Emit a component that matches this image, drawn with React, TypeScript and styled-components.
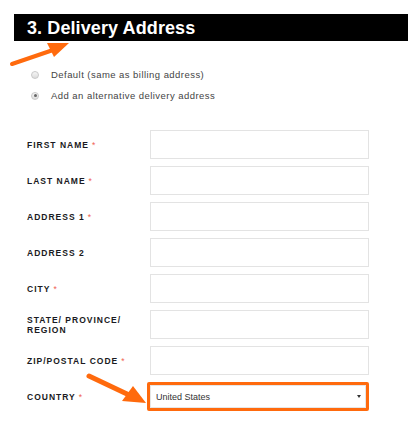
import React from "react";
import styled, { createGlobalStyle } from "styled-components";

const GlobalStyle = createGlobalStyle`
  html, body {
    margin: 0;
    padding: 0;
    background: #fff;
  }
  body {
    font-family: "Liberation Sans", Arial, sans-serif;
  }
`;

const orange = "#ff6a0d";

const fields = [
    { label: "First Name", required: true },
    { label: "Last Name", required: true },
    { label: "Address 1", required: true },
    { label: "Address 2", required: false },
    { label: "City", required: true },
    { label: "State/ Province/ Region", required: false },
    { label: "Zip/Postal Code", required: true },
];

const App = () => {
    return (
        <Page>
            <GlobalStyle />
            <Heading>3. Delivery Address</Heading>

            <RadioList>
                <RadioRow>
                    <Radio />
                    <span>Default (same as billing address)</span>
                </RadioRow>
                <RadioRow>
                    <Radio checked />
                    <span>Add an alternative delivery address</span>
                </RadioRow>
            </RadioList>

            <Form>
                {fields.map((f) => (
                    <Row key={f.label}>
                        <Label>
                            {f.label}
                            {f.required && <Star>*</Star>}
                        </Label>
                        <Input />
                    </Row>
                ))}
                <Row>
                    <Label>
                        Country<Star>*</Star>
                    </Label>
                    <Highlight>
                        <Select>
                            <span>United States</span>
                            <Caret />
                        </Select>
                    </Highlight>
                </Row>
            </Form>

            {/* annotation arrows drawn over the page */}
            <Annotations viewBox="0 0 408 441" width="408" height="441">
                <line x1="12" y1="64" x2="56" y2="49" stroke={orange} strokeWidth="4" strokeLinecap="round" />
                <polygon points="69,43 47,43 54,57" fill={orange} />
                <line x1="89" y1="376" x2="127" y2="394" stroke={orange} strokeWidth="5" strokeLinecap="round" />
                <polygon points="146,403 122,401 133,386" fill={orange} />
            </Annotations>
        </Page>
    );
};

const Page = styled.div`
    position: relative;
    width: 408px;
    height: 441px;
    padding: 14px 0 0 14px;
    box-sizing: border-box;
    overflow: hidden;
`;

const Heading = styled.h2`
    margin: 0;
    height: 27px;
    line-height: 28px;
    padding-left: 13px;
    background: #000;
    color: #fff;
    font-size: 18px;
    font-weight: bold;
    letter-spacing: 0.1px;
`;

const RadioList = styled.div`
    margin-top: 23px;
    padding-left: 17px;
`;

const RadioRow = styled.div`
    display: flex;
    align-items: center;
    height: 21px;
    font-size: 9.5px;
    letter-spacing: 0.45px;
    color: #444;
`;

const Radio = styled.span<{ checked?: boolean }>`
    position: relative;
    width: 8px;
    height: 8px;
    margin-right: 12px;
    border-radius: 50%;
    border: 1px solid #c9c9c9;
    box-sizing: border-box;
    background: linear-gradient(#f6f6f6, #dcdcdc);
    &::after {
        content: "";
        display: ${(p) => (p.checked ? "block" : "none")};
        position: absolute;
        left: 1.5px;
        top: 1.5px;
        width: 3px;
        height: 3px;
        border-radius: 50%;
        background: #666;
    }
`;

const Form = styled.div`
    margin-top: 24px;
    padding-left: 13px;
`;

const Row = styled.div`
    display: flex;
    align-items: center;
    margin-bottom: 7px;
`;

const Label = styled.label`
    width: 123px;
    padding-right: 15px;
    box-sizing: border-box;
    font-size: 8.5px;
    font-weight: bold;
    letter-spacing: 1px;
    line-height: 10px;
    text-transform: uppercase;
    color: #1a1a22;
`;

const Star = styled.span`
    margin-left: 3px;
    color: #f0614f;
    font-weight: normal;
`;

const Input = styled.div`
    width: 219px;
    height: 29px;
    box-sizing: border-box;
    border: 1px solid #e3e3e3;
    background: #fff;
`;

const Highlight = styled.div`
    margin-left: -3px;
    width: 222px;
    height: 29px;
    box-sizing: border-box;
    border: 3.5px solid ${orange};
    border-radius: 2px;
`;

const Select = styled.div`
    display: flex;
    align-items: center;
    justify-content: space-between;
    height: 100%;
    padding: 0 4px 0 5px;
    box-sizing: border-box;
    border: 1px solid #e6e6e6;
    font-size: 9px;
    color: #333;
`;

const Caret = styled.span`
    width: 0;
    height: 0;
    border-left: 2px solid transparent;
    border-right: 2px solid transparent;
    border-top: 3px solid #333;
`;

const Annotations = styled.svg`
    position: absolute;
    left: 0;
    top: 0;
    pointer-events: none;
`;

export default App;
